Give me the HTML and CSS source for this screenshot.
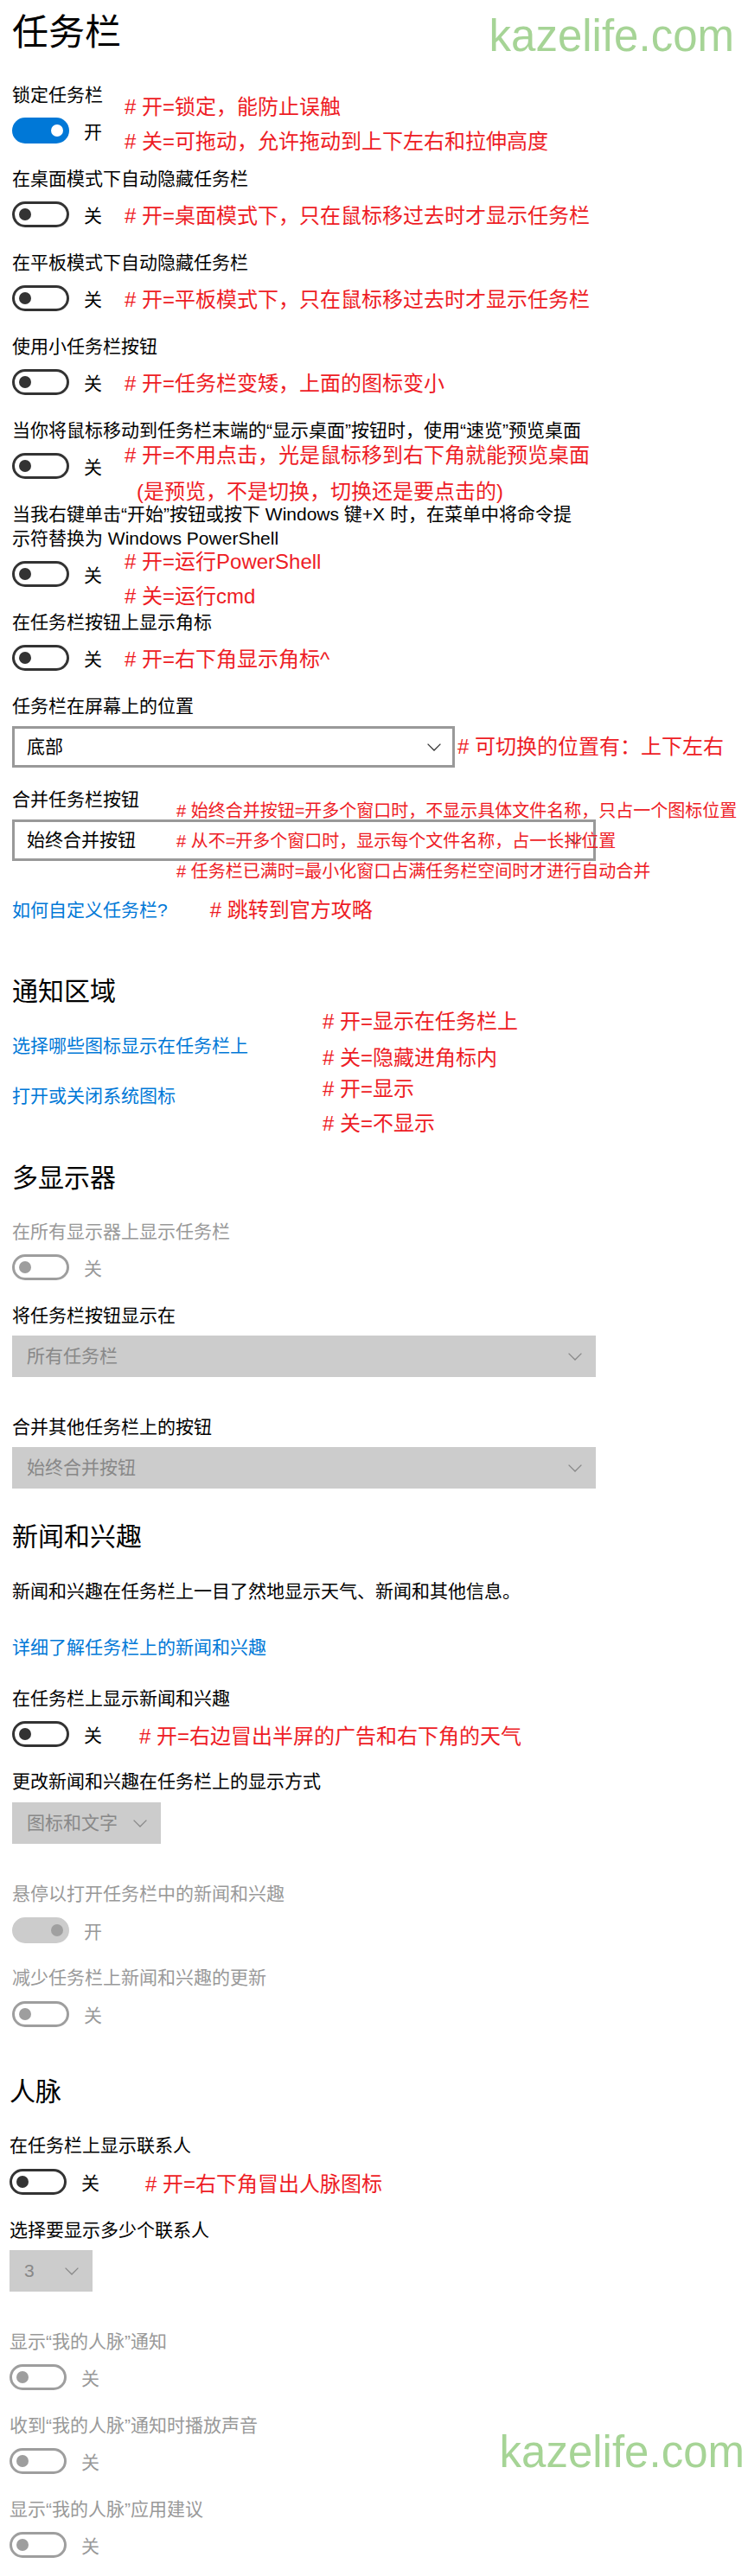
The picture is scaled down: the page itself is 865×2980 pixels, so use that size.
FILE: index.html
```html
<!DOCTYPE html>
<html lang="zh-CN">
<head>
<meta charset="utf-8">
<title>任务栏</title>
<link rel="stylesheet" href="styles.css">
</head>
<body>
<main class="page">
  <header class="page-header">
    <h1 class="page-title">任务栏</h1>
    <span class="watermark">kazelife.com</span>
  </header>

  <section class="group">
    <div class="setting setting--first">
      <div class="label">锁定任务栏</div>
      <div class="row">
        <span class="toggle toggle--on"><span class="knob"></span></span>
        <span class="state">开</span>
        <div class="notes notes--lock">
          <p class="note"># 开=锁定，能防止误触</p>
          <p class="note"># 关=可拖动，允许拖动到上下左右和拉伸高度</p>
        </div>
      </div>
    </div>

    <div class="setting">
      <div class="label">在桌面模式下自动隐藏任务栏</div>
      <div class="row">
        <span class="toggle"><span class="knob"></span></span>
        <span class="state">关</span>
        <div class="notes"><p class="note"># 开=桌面模式下，只在鼠标移过去时才显示任务栏</p></div>
      </div>
    </div>

    <div class="setting">
      <div class="label">在平板模式下自动隐藏任务栏</div>
      <div class="row">
        <span class="toggle"><span class="knob"></span></span>
        <span class="state">关</span>
        <div class="notes"><p class="note"># 开=平板模式下，只在鼠标移过去时才显示任务栏</p></div>
      </div>
    </div>

    <div class="setting">
      <div class="label">使用小任务栏按钮</div>
      <div class="row">
        <span class="toggle"><span class="knob"></span></span>
        <span class="state">关</span>
        <div class="notes"><p class="note"># 开=任务栏变矮，上面的图标变小</p></div>
      </div>
    </div>

    <div class="setting">
      <div class="label">当你将鼠标移动到任务栏末端的“显示桌面”按钮时，使用“速览”预览桌面</div>
      <div class="row">
        <span class="toggle"><span class="knob"></span></span>
        <span class="state">关</span>
        <div class="notes notes--peek">
          <p class="note"># 开=不用点击，光是鼠标移到右下角就能预览桌面</p>
          <p class="note note--indent">(是预览，不是切换，切换还是要点击的)</p>
        </div>
      </div>
    </div>

    <div class="setting">
      <div class="label">当我右键单击“开始”按钮或按下 Windows 键+X 时，在菜单中将命令提<br>示符替换为 Windows PowerShell</div>
      <div class="row">
        <span class="toggle"><span class="knob"></span></span>
        <span class="state">关</span>
        <div class="notes notes--ps">
          <p class="note"># 开=运行PowerShell</p>
          <p class="note"># 关=运行cmd</p>
        </div>
      </div>
    </div>

    <div class="setting">
      <div class="label">在任务栏按钮上显示角标</div>
      <div class="row">
        <span class="toggle"><span class="knob"></span></span>
        <span class="state">关</span>
        <div class="notes"><p class="note"># 开=右下角显示角标^</p></div>
      </div>
    </div>

    <div class="setting">
      <div class="label">任务栏在屏幕上的位置</div>
      <div class="combo-row">
        <div class="combo combo--position">
          <span class="combo-text">底部</span>
          <svg class="chevron" width="16" height="9" viewBox="0 0 16 9"><path d="M0.6 0.6 L8 8 L15.4 0.6"/></svg>
        </div>
        <p class="note note--side"># 可切换的位置有：上下左右</p>
      </div>
    </div>

    <div class="setting setting--merge">
      <div class="label">合并任务栏按钮</div>
      <div class="combo-stack">
        <div class="combo combo--wide">
          <span class="combo-text">始终合并按钮</span>
          <svg class="chevron" width="16" height="9" viewBox="0 0 16 9"><path d="M0.6 0.6 L8 8 L15.4 0.6"/></svg>
        </div>
        <div class="notes notes--merge">
          <p class="note note--small"># 始终合并按钮=开多个窗口时，不显示具体文件名称，只占一个图标位置</p>
          <p class="note note--small"># 从不=开多个窗口时，显示每个文件名称，占一长排位置</p>
          <p class="note note--small"># 任务栏已满时=最小化窗口占满任务栏空间时才进行自动合并</p>
        </div>
      </div>
    </div>

    <div class="link-row link-row--help">
      <a class="link">如何自定义任务栏?</a>
      <p class="note note--help"># 跳转到官方攻略</p>
    </div>
  </section>

  <section class="group group--notify">
    <h2 class="section-title">通知区域</h2>
    <div class="notify-row notify-row--first">
      <a class="link link--col">选择哪些图标显示在任务栏上</a>
      <div class="notes notes--icons">
        <p class="note"># 开=显示在任务栏上</p>
        <p class="note"># 关=隐藏进角标内</p>
      </div>
    </div>
    <div class="notify-row notify-row--second">
      <a class="link link--col">打开或关闭系统图标</a>
      <div class="notes notes--system">
        <p class="note"># 开=显示</p>
        <p class="note"># 关=不显示</p>
      </div>
    </div>
  </section>

  <section class="group group--multi">
    <h2 class="section-title">多显示器</h2>
    <div class="setting setting--lead">
      <div class="label label--disabled">在所有显示器上显示任务栏</div>
      <div class="row">
        <span class="toggle toggle--disabled"><span class="knob"></span></span>
        <span class="state state--disabled">关</span>
      </div>
    </div>
    <div class="setting">
      <div class="label">将任务栏按钮显示在</div>
      <div class="combo combo--wide combo--disabled combo--spaced">
        <span class="combo-text">所有任务栏</span>
        <svg class="chevron" width="16" height="9" viewBox="0 0 16 9"><path d="M0.6 0.6 L8 8 L15.4 0.6"/></svg>
      </div>
    </div>
    <div class="setting setting--after-combo">
      <div class="label">合并其他任务栏上的按钮</div>
      <div class="combo combo--wide combo--disabled combo--spaced">
        <span class="combo-text">始终合并按钮</span>
        <svg class="chevron" width="16" height="9" viewBox="0 0 16 9"><path d="M0.6 0.6 L8 8 L15.4 0.6"/></svg>
      </div>
    </div>
  </section>

  <section class="group group--news">
    <h2 class="section-title">新闻和兴趣</h2>
    <p class="desc">新闻和兴趣在任务栏上一目了然地显示天气、新闻和其他信息。</p>
    <a class="link link--block">详细了解任务栏上的新闻和兴趣</a>
    <div class="setting setting--news">
      <div class="label">在任务栏上显示新闻和兴趣</div>
      <div class="row">
        <span class="toggle"><span class="knob"></span></span>
        <span class="state">关</span>
        <div class="notes notes--news"><p class="note"># 开=右边冒出半屏的广告和右下角的天气</p></div>
      </div>
    </div>
    <div class="setting setting--close">
      <div class="label">更改新闻和兴趣在任务栏上的显示方式</div>
      <div class="combo combo--mode combo--disabled combo--spaced-10">
        <span class="combo-text">图标和文字</span>
        <svg class="chevron" width="16" height="9" viewBox="0 0 16 9"><path d="M0.6 0.6 L8 8 L15.4 0.6"/></svg>
      </div>
    </div>
    <div class="setting setting--after-combo">
      <div class="label label--disabled">悬停以打开任务栏中的新闻和兴趣</div>
      <div class="row row--loose">
        <span class="toggle toggle--disabled-on"><span class="knob"></span></span>
        <span class="state state--disabled">开</span>
      </div>
    </div>
    <div class="setting setting--close">
      <div class="label label--disabled">减少任务栏上新闻和兴趣的更新</div>
      <div class="row row--loose">
        <span class="toggle toggle--disabled"><span class="knob"></span></span>
        <span class="state state--disabled">关</span>
      </div>
    </div>
  </section>

  <section class="group group--people">
    <h2 class="section-title">人脉</h2>
    <div class="setting setting--lead">
      <div class="label">在任务栏上显示联系人</div>
      <div class="row row--loose">
        <span class="toggle"><span class="knob"></span></span>
        <span class="state">关</span>
        <div class="notes notes--people"><p class="note"># 开=右下角冒出人脉图标</p></div>
      </div>
    </div>
    <div class="setting">
      <div class="label">选择要显示多少个联系人</div>
      <div class="combo combo--count combo--disabled combo--spaced">
        <span class="combo-text">3</span>
        <svg class="chevron" width="16" height="9" viewBox="0 0 16 9"><path d="M0.6 0.6 L8 8 L15.4 0.6"/></svg>
      </div>
    </div>
    <div class="setting setting--after-combo">
      <div class="label label--disabled">显示“我的人脉”通知</div>
      <div class="row">
        <span class="toggle toggle--disabled"><span class="knob"></span></span>
        <span class="state state--disabled">关</span>
      </div>
    </div>
    <div class="setting">
      <div class="label label--disabled">收到“我的人脉”通知时播放声音</div>
      <div class="row">
        <span class="toggle toggle--disabled"><span class="knob"></span></span>
        <span class="state state--disabled">关</span>
      </div>
    </div>
    <div class="setting">
      <div class="label label--disabled">显示“我的人脉”应用建议</div>
      <div class="row">
        <span class="toggle toggle--disabled"><span class="knob"></span></span>
        <span class="state state--disabled">关</span>
      </div>
    </div>
  </section>

  <span class="watermark watermark--bottom">kazelife.com</span>
</main>
</body>
</html>
```

FILE: styles.css
```css
* {
  box-sizing: border-box;
}

html,
body {
  margin: 0;
  padding: 0;
  background: #ffffff;
}

body {
  font-family: "Liberation Sans", "Noto Sans CJK SC", sans-serif;
  color: #000000;
  font-size: 21px;
  line-height: 28px;
}

p,
h1,
h2 {
  margin: 0;
  font-weight: normal;
}

.page {
  position: relative;
  width: 865px;
  padding: 16px 0 0 14px;
}

/* ---------- header ---------- */
.page-header {
  display: flex;
  align-items: flex-start;
  height: 51px;
}

.page-title {
  margin-top: 1px;
  font-size: 42px;
  line-height: 42px;
}

.watermark {
  margin-left: auto;
  margin-right: 16px;
  font-family: "Liberation Sans", Arial, sans-serif;
  font-size: 51px;
  line-height: 51px;
  color: #a6d496;
  white-space: nowrap;
}

.watermark--bottom {
  position: absolute;
  top: 2811px;
  right: 4px;
  margin: 0;
}

/* ---------- sections ---------- */
.section-title {
  font-size: 30px;
  line-height: 40px;
}

.group--notify {
  margin-top: 60px;
}

.group--multi {
  margin-top: 61px;
}

.group--news {
  margin-top: 36px;
}

.group--people {
  margin-top: 55px;
  margin-left: -3px;
}

/* ---------- settings ---------- */
.setting {
  margin-top: 27px;
}

.setting--first {
  margin-top: 29px;
}

.setting--lead {
  margin-top: 28px;
}

.setting--merge {
  margin-top: 23px;
}

.setting--after-combo {
  margin-top: 44px;
}

.setting--close {
  margin-top: 26px;
}

.setting--news {
  margin-top: 31px;
}

.label {
  line-height: 28px;
  white-space: nowrap;
}

.label--disabled {
  color: #999999;
}

.desc {
  margin-top: 29px;
  line-height: 28px;
}

/* ---------- toggle rows ---------- */
.row {
  display: flex;
  align-items: flex-start;
  height: 30px;
  margin-top: 12px;
}

.row--loose {
  margin-top: 13px;
}

.toggle {
  flex: none;
  display: flex;
  align-items: center;
  width: 66px;
  height: 30px;
  padding-left: 5px;
  border: 3px solid #333333;
  border-radius: 15px;
}

.knob {
  width: 14px;
  height: 14px;
  border-radius: 50%;
  background: #333333;
}

.toggle--on {
  justify-content: flex-end;
  padding-left: 0;
  padding-right: 4px;
  background: #0078d7;
  border-color: #0078d7;
}

.toggle--on .knob {
  background: #ffffff;
}

.toggle--disabled {
  border-color: #9e9e9e;
}

.toggle--disabled .knob {
  background: #9e9e9e;
}

.toggle--disabled-on {
  justify-content: flex-end;
  padding-left: 0;
  padding-right: 4px;
  background: #cccccc;
  border-color: #cccccc;
}

.toggle--disabled-on .knob {
  background: #a0a0a0;
}

.state {
  flex: none;
  margin-left: 17px;
  padding-top: 2px;
  line-height: 30px;
}

.state--disabled {
  color: #999999;
}

/* ---------- red annotations ---------- */
.notes {
  display: flex;
  flex-direction: column;
  margin-left: 26px;
  margin-top: 5px;
}

.note {
  font-size: 24px;
  line-height: 24px;
  color: #ee1c25;
  white-space: nowrap;
}

.note--small {
  font-size: 20px;
  line-height: 20px;
}

.note--indent {
  padding-left: 14px;
}

.notes--lock {
  margin-top: -24px;
  gap: 16px;
}

.notes--peek {
  margin-top: -9px;
  gap: 18px;
}

.notes--ps {
  margin-top: -11px;
  gap: 16px;
}

.notes--news {
  margin-left: 43px;
  margin-top: 6px;
}

.notes--people {
  margin-left: 53px;
  margin-top: 6px;
}

/* ---------- combo boxes ---------- */
.combo {
  flex: none;
  display: flex;
  align-items: center;
  justify-content: space-between;
  height: 48px;
  padding: 0 13px 0 14px;
  border: 3px solid #999999;
  background: #ffffff;
}

.combo-text {
  line-height: 28px;
  white-space: nowrap;
}

.chevron {
  flex: none;
  display: block;
}

.chevron path {
  fill: none;
  stroke: #333333;
  stroke-width: 1.3;
}

.combo--position {
  width: 512px;
}

.combo--wide {
  width: 675px;
}

.combo--mode {
  width: 172px;
}

.combo--count {
  width: 96px;
}

.combo--disabled {
  background: #cccccc;
  border-color: #cccccc;
  color: #888888;
}

.combo--disabled .chevron path {
  stroke: #888888;
}

.combo--spaced {
  margin-top: 9px;
}

.combo--spaced-10 {
  margin-top: 10px;
}

.combo-row {
  display: flex;
  align-items: center;
  margin-top: 9px;
}

.note--side {
  margin-left: 3px;
}

.combo-stack {
  display: grid;
  grid-template-rows: 48px;
  margin-top: 9px;
}

.combo-stack > .combo,
.combo-stack > .notes {
  grid-area: 1 / 1;
}

.notes--merge {
  align-self: start;
  margin-left: 190px;
  margin-top: -20px;
  gap: 15px;
}

/* ---------- links ---------- */
.link {
  color: #0078d7;
  line-height: 28px;
  white-space: nowrap;
  cursor: pointer;
}

.link--block {
  display: block;
  margin-top: 37px;
}

.link-row {
  display: flex;
  align-items: center;
  height: 28px;
}

.link-row--help {
  margin-top: 43px;
}

.note--help {
  margin-left: 49px;
}

.notify-row {
  display: flex;
  align-items: flex-start;
  height: 28px;
}

.notify-row--first {
  margin-top: 29px;
}

.notify-row--second {
  margin-top: 30px;
}

.link--col {
  flex: none;
  width: 359px;
}

.notes--icons {
  margin-left: 0;
  margin-top: -26px;
  gap: 18px;
}

.notes--system {
  margin-left: 0;
  margin-top: -6px;
  gap: 16px;
}
```
